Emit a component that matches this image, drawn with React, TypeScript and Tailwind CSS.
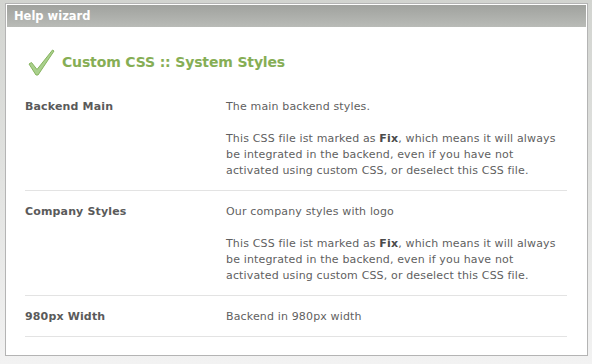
import React from 'react';

const Row = ({label, children}: {label: string; children: React.ReactNode}) => {
  return (
    <div className="flex border-b border-[#e3e3e3] pt-[13px] pb-[11px]">
      <div className="w-[201px] shrink-0 font-bold text-[#5a5a5a]">{label}</div>
      <div className="flex-1 pr-[4px] text-[#5f5f5f]">{children}</div>
    </div>
  );
};

const Fix = () => (
  <p className="mt-4">
    This CSS file ist marked as <b className="text-[#4a4a4a]">Fix</b>, which means it will always be integrated in the
    backend, even if you have not activated using custom CSS, or deselect this CSS file.
  </p>
);

export default function App() {
  return (
    <div className="h-[364px] w-[592px] bg-gradient-to-b from-[#d2d4d0] to-[#f2f2f2] pt-[3px] pl-[5px] font-['DejaVu_Sans',sans-serif] text-[11px] leading-4 tracking-[0.15px]">
      <div className="h-[353px] w-[583px] border border-[#b4b4b4] bg-white p-px">
        <div className="h-[22px] bg-gradient-to-b from-[#a0a29e] to-[#b9bbb7] pl-[7px] text-[11.5px] leading-[22px] font-bold tracking-normal text-white">
          Help wizard
        </div>
        <div className="pl-[18px] pr-[19px]">
          <div className="mt-[21px] mb-[10px] flex h-7 items-center gap-[7px] pl-[3px]">
            <svg width="27" height="27" viewBox="0 0 27 27">
              <path
                d="M1 15 L3.5 13.5 L9 20.5 L24.5 1 L26 2 L10 26 L8 26 Z"
                fill="#a9d08c"
                stroke="#86b35e"
                strokeWidth="1"
                strokeLinejoin="round"
              />
            </svg>
            <span className="text-[14px] font-bold tracking-[-0.15px] text-[#86ae55]">Custom CSS :: System Styles</span>
          </div>
          <Row label="Backend Main">
            <p>The main backend styles.</p>
            <Fix />
          </Row>
          <Row label="Company Styles">
            <p>Our company styles with logo</p>
            <Fix />
          </Row>
          <Row label="980px Width">
            <p>Backend in 980px width</p>
          </Row>
        </div>
      </div>
    </div>
  );
}
